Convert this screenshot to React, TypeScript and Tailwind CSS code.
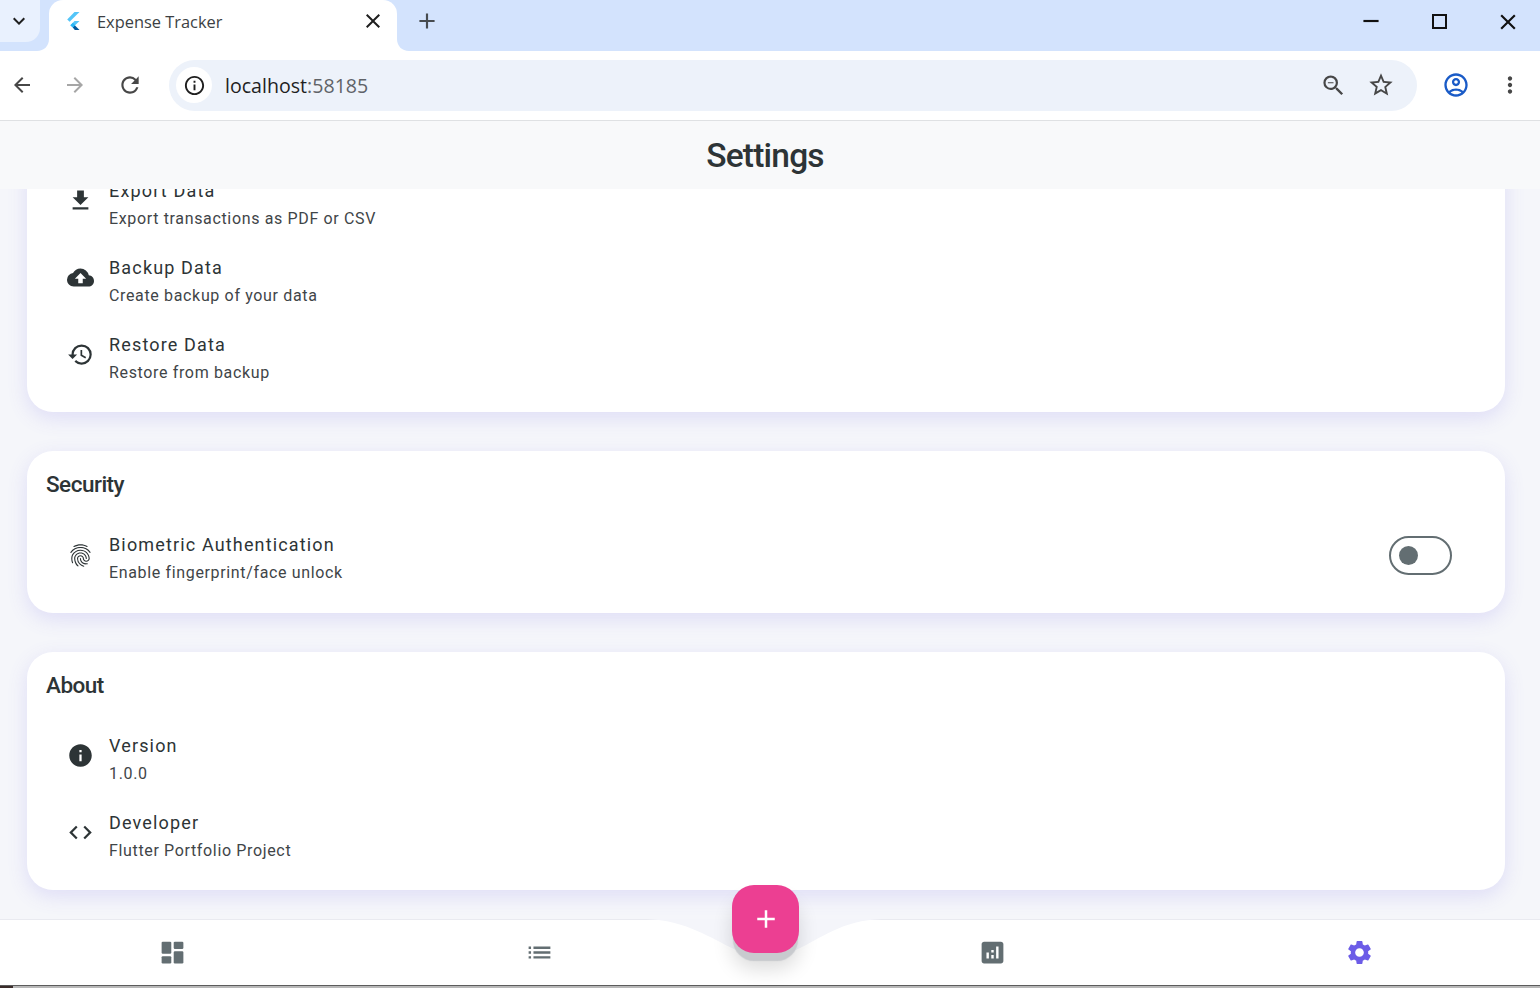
import {
	MdAdd,
	MdAnalytics,
	MdArrowBack,
	MdArrowForward,
	MdClose,
	MdCloudUpload,
	MdCode,
	MdFileDownload,
	MdFingerprint,
	MdHistory,
	MdInfo,
	MdInfoOutline,
	MdKeyboardArrowDown,
	MdList,
	MdMoreVert,
	MdOutlineAccountCircle,
	MdRefresh,
	MdRemove,
	MdSettings,
	MdStarBorder,
	MdZoomOut,
} from 'react-icons/md';
import type { IconType } from 'react-icons';

const sans = { fontFamily: 'Roboto, sans-serif' };

type RowProps = {
	icon: IconType;
	title: string;
	subtitle: string;
	tall?: boolean;
	children?: React.ReactNode;
};

function Row({ icon: Icon, title, subtitle, tall, children }: RowProps) {
	return (
		<div className={`flex items-center pl-[39.5px] pr-[53px] ${tall ? 'h-[78px]' : 'h-[77px]'}`}>
			<Icon className={`h-[27px] w-[27px] shrink-0 text-[#2d3436] ${tall ? '-mt-[1px]' : '-mt-[3px]'}`} />
			<div className="ml-[15.5px] flex-1 pt-[5.5px]">
				<div className="text-[18px] leading-[27px] tracking-[1.15px] text-[#2d3436]">{title}</div>
				<div className="mt-[2px] text-[16px] leading-[26px] tracking-[0.65px] text-[#3f4548]">{subtitle}</div>
			</div>
			{children}
		</div>
	);
}

function Card({ title, children }: { title: string; children: React.ReactNode }) {
	return (
		<section className="rounded-[26px] bg-white pb-[18px] shadow-[0_6px_20px_rgba(108,92,231,0.16)]">
			<h2 className="flex h-[66px] items-center pt-[2px] pl-[19px] text-[22.5px] font-medium tracking-[-0.5px] text-[#2d3436]">
				{title}
			</h2>
			{children}
		</section>
	);
}

function FlutterLogo() {
	return (
		<svg viewBox="0 0 16 20" className="h-[20px] w-[16px]">
			<path d="M9.5 0h5L4.6 9.8 2.2 7.4z" fill="#54c5f8" />
			<path d="M14.5 9h-5L5.4 13.2l2.4 2.4z" fill="#54c5f8" />
			<path d="M7.8 15.6l2 2.4h4.7l-5-5z" fill="#01579b" />
			<path d="M5.4 13.2L7.9 10.8l2.4 2.4-2.5 2.4z" fill="#29b6f6" />
		</svg>
	);
}

// rounded version of the material dashboard glyph
function DashboardIcon() {
	return (
		<svg viewBox="0 0 24 24" className="h-[29px] w-[29px] fill-[#636e72]">
			<rect x="3" y="3" width="8" height="10" rx="1" />
			<rect x="13" y="3" width="8" height="6" rx="1" />
			<rect x="13" y="11" width="8" height="10" rx="1" />
			<rect x="3" y="15" width="8" height="6" rx="1" />
		</svg>
	);
}

function BrowserChrome() {
	return (
		<header className="shrink-0" style={{ fontFamily: '"Open Sans", sans-serif' }}>
			<div className="relative flex h-[51px] items-start bg-[#d3e3fd]">
				<div className="flex h-[42px] w-[40px] items-center justify-center rounded-br-[14px] bg-[#e9f1fe]">
					<MdKeyboardArrowDown className="-ml-[2px] h-[24px] w-[24px] text-[#1f1f1f]" />
				</div>
				<div className="relative ml-[9px] flex h-[51px] w-[348px] items-center rounded-t-[14px] bg-white pb-[7px] pl-[16px]">
					<svg viewBox="0 0 12 12" className="absolute bottom-0 left-[-12px] h-[12px] w-[12px]">
						<path d="M12 0v12H0C7 12 12 7 12 0z" fill="#fff" />
					</svg>
					<svg viewBox="0 0 12 12" className="absolute bottom-0 right-[-12px] h-[12px] w-[12px]">
						<path d="M0 0v12h12C5 12 0 7 0 0z" fill="#fff" />
					</svg>
					<FlutterLogo />
					<span className="ml-[16px] text-[16.4px] text-[#3c3f43]">Expense Tracker</span>
					<MdClose className="absolute left-[312px] top-[9px] h-[24px] w-[24px] text-[#1f1f1f]" />
				</div>
				<MdAdd className="ml-[17px] mt-[8px] h-[26px] w-[26px] text-[#474c50]" />
				<div className="ml-auto flex h-[42px] items-center pr-[19px] text-[#111]">
					<MdRemove className="h-[26px] w-[26px]" />
					<div className="ml-[48px] h-[15px] w-[15px] border-2 border-[#111]" />
					<MdClose className="ml-[48px] mt-[1px] h-[26px] w-[26px]" />
				</div>
			</div>
			<div className="flex h-[70px] items-center border-b border-[#dfe1e3] bg-white pb-[1px]">
				<MdArrowBack className="ml-[10px] h-[24px] w-[24px] text-[#474747]" />
				<MdArrowForward className="ml-[29px] h-[24px] w-[24px] text-[#a6a6a6]" />
				<MdRefresh className="ml-[30px] h-[26px] w-[26px] text-[#474747]" />
				<div className="ml-[26px] flex h-[51px] w-[1248px] items-center rounded-full bg-[#edf2fa] pl-[7px] pr-[22px]">
					<div className="flex h-[36px] w-[36px] items-center justify-center rounded-full bg-white">
						<MdInfoOutline className="h-[23px] w-[23px] text-[#1f1f1f]" />
					</div>
					<span className="ml-[13px] flex-1 pt-[1px] text-[19.6px] text-[#1f1f1f]">
						localhost<span className="text-[#5f6368]">:58185</span>
					</span>
					<MdZoomOut className="h-[27px] w-[27px] text-[#474747]" />
					<MdStarBorder className="ml-[20px] h-[28px] w-[28px] text-[#474747]" />
				</div>
				<MdOutlineAccountCircle className="ml-[25px] h-[28px] w-[28px] text-[#1a5bc7]" />
				<MdMoreVert className="ml-[27px] h-[26px] w-[26px] text-[#474747]" />
			</div>
		</header>
	);
}

function BottomNav() {
	return (
		<nav className="relative z-10 flex h-[66px] shrink-0 items-center justify-between border-t border-[#e9eaf0] bg-white pl-[158px] pr-[166px]">
			<div className="flex w-[396px] justify-between">
				<DashboardIcon />
				<MdList className="h-[29px] w-[29px] text-[#636e72]" />
			</div>
			<div className="flex w-[396px] justify-between">
				<MdAnalytics className="h-[29px] w-[29px] text-[#636e72]" />
				<MdSettings className="h-[29px] w-[29px] text-[#6c5ce7]" />
			</div>
			<svg viewBox="0 0 240 42" className="absolute left-[646px] top-[-1px] h-[42px] w-[240px]">
				<path d="M0 0C40 1 66 20 88 30c8 4 16 10 32 10s24-6 32-10C174 20 196 1 236 0z" fill="#f4f5fa" />
			</svg>
			<button className="absolute left-[732px] top-[-35px] flex h-[68px] w-[67px] items-center justify-center rounded-[22px] bg-[#ec3f92] pb-[1px] shadow-[0_9px_1px_-1px_#c8cace,0_16px_20px_rgba(0,0,0,0.14)]">
				<MdAdd className="h-[30px] w-[30px] text-white" />
			</button>
		</nav>
	);
}

export default function App() {
	return (
		<div className="flex h-[988px] w-[1540px] flex-col overflow-hidden bg-white" style={sans}>
			<BrowserChrome />
			<div className="flex h-[68px] shrink-0 items-center justify-center bg-[#f8f9fa] pr-[10px] pt-[2px]">
				<h1 className="text-[33.5px] font-medium tracking-[-0.8px] text-[#2d3436]">Settings</h1>
			</div>
			<main className="flex min-h-0 flex-1 flex-col gap-[39px] overflow-hidden bg-[#f5f6fa] pl-[27px] pr-[35px]">
				<section className="-mt-[26px] shrink-0 rounded-b-[26px] bg-white pb-[18px] shadow-[0_6px_20px_rgba(108,92,231,0.16)]">
					<Row icon={MdFileDownload} title="Export Data" subtitle="Export transactions as PDF or CSV" />
					<Row icon={MdCloudUpload} title="Backup Data" subtitle="Create backup of your data" />
					<Row icon={MdHistory} title="Restore Data" subtitle="Restore from backup" />
				</section>
				<Card title="Security">
					<Row icon={MdFingerprint} title="Biometric Authentication" subtitle="Enable fingerprint/face unlock" tall>
						<div className="-mt-[2px] flex h-[39px] w-[63px] items-center rounded-full border-[2.5px] border-[#636e72] pl-[8px]">
							<div className="h-[19px] w-[19px] rounded-full bg-[#636e72]" />
						</div>
					</Row>
				</Card>
				<Card title="About">
					<Row icon={MdInfo} title="Version" subtitle="1.0.0" />
					<Row icon={MdCode} title="Developer" subtitle="Flutter Portfolio Project" />
				</Card>
			</main>
			<BottomNav />
			<div className="flex h-[3px] shrink-0 border-t border-[#5c5c5c] bg-[#b8b8b8]">
				<div className="w-[13px] bg-[#3a2c2a]" />
			</div>
		</div>
	);
}
